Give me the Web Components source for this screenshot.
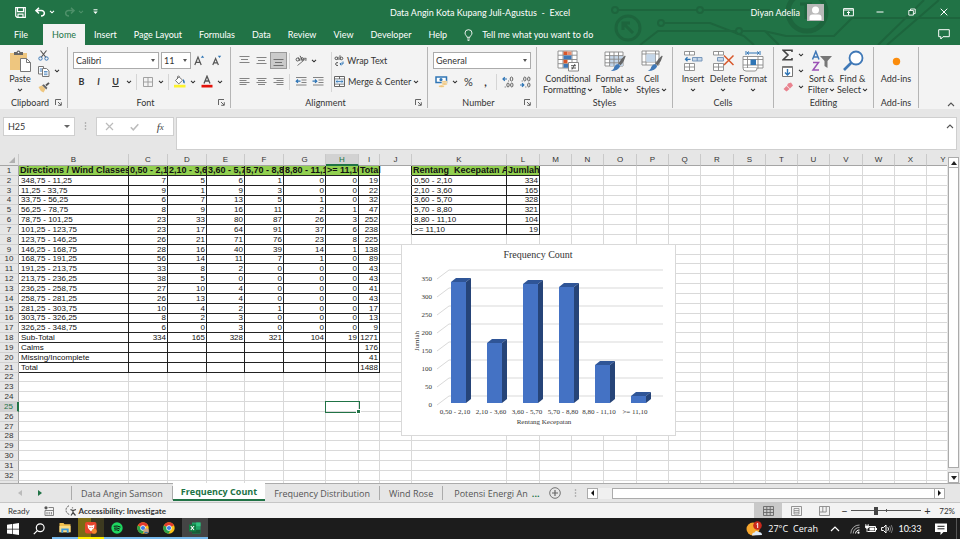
<!DOCTYPE html>
<html lang="en">
<head>
<meta charset="utf-8">
<title>Data Angin Kota Kupang Juli-Agustus - Excel</title>
<style>
html,body{margin:0;height:100%}
body{font-family:Lato,"Open Sans",sans-serif;font-size:9px;color:#333;overflow:hidden;background:#e6e6e6}
</style>
</head>
<body>
<xl-app></xl-app>
<script>
const G = '#217346';
const lines = rows => rows.map(([a, b, y]) => `<path d="M${a} ${y}H${b}"/>`).join('');
const ICONS = {
  save: [11, 11, `<path d="M.7.7h9.6v9.6H2L.7 9z M2.5.7v4h6v-4 M3 10V7.2h5V10" fill="none" stroke="#fff" stroke-width="1.2"/>`],
  undo: [11, 10, `<path d="M4 .8 1 3.6l3 2.9M1.2 3.6h5.2c4 0 4 5.4-.4 5.4" fill="none" stroke="#fff" stroke-width="1.5"/>`],
  redo: [11, 10, `<path d="M7 .8l3 2.8-3 2.9M9.8 3.6H4.6C.6 3.6.6 9 5 9" fill="none" stroke="#4d9069" stroke-width="1.5"/>`],
  chev: [6, 4, `<path d="M1 .8 3 2.8 5 .8" fill="none" stroke="currentColor" stroke-width="1.1"/>`],
  custom: [5, 6, `<path d="M.5.8h4" stroke="#fff"/><path d="M.3 2.6h4.4L2.5 5z" fill="#fff"/>`],
  display: [11, 9, `<path d="M.6.6h9.8v7.2H.6zM.6 2h9.8M5.500 7V3.600M4 5l1.500-1.500L7 5" fill="none" stroke="#fff"/>`],
  min: [8, 8, `<path d="M.5 4h7" stroke="#fff"/>`],
  max: [8, 8, `<path d="M.8 2.500h4.600v4.600H.8zM2.500 2.300V1h4.700v4.600H5.600" fill="none" stroke="#fff" stroke-width=".9"/>`],
  close: [8, 8, `<path d="M.7.700l6.600 6.600M7.300.7L.7 7.300" stroke="#fff"/>`],
  comment: [12, 11, `<path d="M.7.700h10.600v7H5L2.800 10V7.700H.7z" fill="none" stroke="#fff"/>`],
  bulb: [9, 12, `<path d="M3 8.300C3 6.800 1 6.200 1 4a3.500 3.300 0 0 1 7 0c0 2.200-2 2.800-2 4.300zM3.200 10h2.600M3.600 11.400h1.800" fill="none" stroke="#fff" stroke-width=".9"/>`],
  user: [17, 17, `<path d="M0 0h17v17H0z" fill="#b9b9b9"/><circle cx="8.500" cy="6" r="3.500" fill="#fff"/><path d="M2.500 16v-2.500q0-3 3-3h6q3 0 3 3V16z" fill="#fff"/>`],
  paste: [21, 22, `<path d="M0 3h17v17H0z" fill="#eec67f"/><path d="M4 5V2h2.600a2 2 0 0 1 3.800 0H13v3z" fill="#666"/><circle cx="8.500" cy="2.500" r=".8" fill="#fff"/><path d="M10.500 8.500h6l4 4v9h-10z" fill="#fff" stroke="#777"/><path d="M16.500 8.500v4h4" fill="none" stroke="#777"/>`],
  cut: [11, 11, `<path d="M2.500.5 8 7.500M8.500.5 3 7.500" stroke="#555" stroke-width="1.200"/><circle cx="2.500" cy="8.500" r="1.700" fill="none" stroke="#3b79b8"/><circle cx="8.500" cy="8.500" r="1.700" fill="none" stroke="#3b79b8"/>`],
  copy: [12, 11, `<path d="M.5.500h5v7.500h-5z" fill="#fff" stroke="#777"/><path d="M1.800 3h2.400M1.800 5h2.400" stroke="#3b79b8"/><path d="M4.500 2.500h4l2.500 2.300v5.700H4.500z" fill="#fff" stroke="#777"/><path d="M6 5.500h3.500M6 7h3.500M6 8.700h3.500" stroke="#3b79b8" stroke-width=".8"/>`],
  painter: [12, 11, `<path d="M.5 5 4 3.500 7.500 7 5.500 10.500 2.800 9z" fill="#eec67f"/><path d="M4 3.200l1.800-1 3.600 3.500-1 1.800z" fill="#666"/><path d="M8 3.500 11 .8" stroke="#555" stroke-width="1.800"/>`],
  grow: [11, 11, `<path d="M.8 10 4 2l3.200 8M2 7.300h4" fill="none" stroke="#555" stroke-width="1.200"/><path d="M6.800 2.800 8.500.600l1.700 2.200z" fill="#2f75b5"/>`],
  shrink: [10, 11, `<path d="M.8 10 3.600 3.500 6.400 10M1.800 7.800h3.600" fill="none" stroke="#555" stroke-width="1.200"/><path d="M5.800.800h3.400L7.500 3z" fill="#2f75b5"/>`],
  borders: [10, 10, `<path d="M.5.500h9v9h-9zM5 .5v9M.5 5h9" fill="none" stroke="#999" stroke-width=".9"/>`],
  bucket: [13, 13, `<path d="M2.500 5.500 6 1.800l3.600 3.400-3.800 3.700z" fill="#fff" stroke="#666" stroke-width=".9"/><path d="M4.500 4V1.500q1.200-1.500 2 .5" fill="none" stroke="#666" stroke-width=".8"/><path d="M10 4q2.500 2 1.500 4.500-1.500 0-1.500-2z" fill="#2f75b5"/><path d="M1 9.800h11.500v2.700H1z" fill="#fdf32c"/>`],
  fcolor: [12, 13, `<path d="M3 8.500 6 1.200l3 7.300M4 6h4" fill="none" stroke="#555" stroke-width="1.300"/><path d="M.5 9.800h11v2.700H.5z" fill="#e3120b"/>`],
  alT: [11, 9, `<g stroke="#777" stroke-width=".9">${lines([[.5,10.5,.5],[2,9,3.5],[.5,10.5,6.5]])}</g>`],
  alM: [11, 9, `<g stroke="#777" stroke-width=".9">${lines([[.5,10.5,1.5],[2,9,4.5],[.5,10.5,7.5]])}</g>`],
  alB: [11, 11, `<g stroke="#666" stroke-width=".9">${lines([[.5,10.5,4.5],[2,9,7.5],[.5,10.5,10.5]])}</g>`],
  alL: [11, 9, `<g stroke="#777" stroke-width=".9">${lines([[.5,10.5,1.5],[.5,7.5,3.5],[.5,10.5,5.5],[.5,7.5,7.5]])}</g>`],
  alC: [11, 9, `<g stroke="#777" stroke-width=".9">${lines([[.5,10.5,1.5],[2,9,3.5],[.5,10.5,5.5],[2,9,7.5]])}</g>`],
  alR: [11, 9, `<g stroke="#777" stroke-width=".9">${lines([[.5,10.5,1.5],[3.5,10.5,3.5],[.5,10.5,5.5],[3.5,10.5,7.5]])}</g>`],
  outd: [12, 9, `<g stroke="#777" stroke-width=".9">${lines([[1,11.5,.5],[6.5,11.5,3],[6.5,11.5,5.5],[1,11.5,8]])}</g><path d="M5.500 4.200H1.500M3 2.500 1.200 4.200 3 5.900" fill="none" stroke="#2f75b5" stroke-width="1.200"/>`],
  ind: [12, 9, `<g stroke="#777" stroke-width=".9">${lines([[1,11.5,.5],[6.5,11.5,3],[6.5,11.5,5.5],[1,11.5,8]])}</g><path d="M.500 4.200h4M3 2.500 4.800 4.200 3 5.900" fill="none" stroke="#2f75b5" stroke-width="1.200"/>`],
  orient: [12, 11, `<circle cx="2.600" cy="4.500" r="1.500" fill="none" stroke="#555"/><path d="M3.500 2.500 5 6M5 .8l2.500 4.500" stroke="#555"/><circle cx="7.200" cy="4" r="1.300" fill="none" stroke="#555"/><path d="M2.500 10.500 11 3.500M8.500 3.300 11.200 3.300 10.800 6" fill="none" stroke="#777"/>`],
  wrap: [10, 12, `<circle cx="2.300" cy="3.300" r="1.300" fill="none" stroke="#555"/><path d="M4 1.800V5M6 .3V5" stroke="#555"/><circle cx="7.500" cy="3.400" r="1.300" fill="none" stroke="#555"/><path d="M4 7.800a1.500 1.500 0 1 0 0 2.500" fill="none" stroke="#555"/><path d="M9 6.500v2.500H6M7.300 7.600 5.900 9l1.400 1.400" fill="none" stroke="#2f75b5"/>`],
  merge: [11, 11, `<path d="M.5.500h10v10H.5z" fill="#fff" stroke="#666"/><path d="M.5 3h10M.5 8h10M5.500.500v2.500M5.500 8v2.500" stroke="#666"/><path d="M1 3.500h9v4H1z" fill="#dbe8f5"/><path d="M2 5.500h7M3.500 4.300 2.200 5.500l1.300 1.200M7.500 4.300l1.300 1.200-1.300 1.200" fill="none" stroke="#2f75b5" stroke-width=".8"/>`],
  money: [13, 12, `<path d="M1 1h10.500v5.500H1z" fill="#fff" stroke="#2f75b5" stroke-width="1.500"/><circle cx="6" cy="3.700" r="1.600" fill="#2f75b5"/><g fill="#eec67f" stroke="#fff" stroke-width=".4"><ellipse cx="9.500" cy="6" rx="3" ry="1.300"/><ellipse cx="9.500" cy="8" rx="3" ry="1.300"/><ellipse cx="6.500" cy="10.300" rx="3" ry="1.300"/></g>`],
  incd: [12, 12, `<path d="M5 3H1.300M2.800 1.300 1 3l1.800 1.700" fill="none" stroke="#2f75b5" stroke-width="1.200"/><g fill="none" stroke="#555" stroke-width=".9"><ellipse cx="9.500" cy="3" rx="1.300" ry="2"/><ellipse cx="6" cy="9" rx="1.200" ry="2"/><ellipse cx="9.800" cy="9" rx="1.200" ry="2"/><path d="M6.600 4.500v1M3.200 10.500v1"/></g>`],
  decd: [12, 12, `<path d="M1 9h3.700M3 7.300 4.800 9 3 10.700" fill="none" stroke="#2f75b5" stroke-width="1.200"/><g fill="none" stroke="#555" stroke-width=".9"><ellipse cx="9.800" cy="3" rx="1.200" ry="2"/><ellipse cx="5.800" cy="3" rx="1.200" ry="2"/><ellipse cx="9.800" cy="9" rx="1.200" ry="2"/><path d="M3.200 4.500v1M6.800 10.500v1"/></g>`],
  cond: [22, 22, `<path d="M1 1h19v17H1z" fill="#fff" stroke="#888" stroke-width=".9"/><path d="M1 5.200h19M1 9.500h19M1 13.700h19M6 1v17M15 1v17" stroke="#888" stroke-width=".9"/><path d="M6.500 1.500h4v3.500h-4zM6.500 9.800h4v3.500h-4z" fill="#d8572a"/><path d="M6.500 5.500h8v3.800h-8zM6.500 14h5v3.800h-5z" fill="#3f78b7"/><path d="M10.500 1.500h4v3.500h-4z" fill="#e98d6d"/><path d="M11.500 12.500h10v8.500h-10z" fill="#fff" stroke="#888"/><path d="M14 15.700h5M14 18h5M18 14l-3 5.500" stroke="#444" stroke-width=".9"/>`],
  fmtTable: [22, 22, `<path d="M1 2h18v14H1z" fill="#fff" stroke="#888" stroke-width=".9"/><path d="M5.800 6h13v10h-13z" fill="#c5d7ea"/><path d="M1 5.600h18M1 9.200h18M1 12.800h18M5.600 2v14M10 2v14M14.500 2v14" stroke="#888" stroke-width=".9"/><path d="M21 5.500q-4 3-6.500 8l2 2q4-4 5-9z" fill="#666"/><path d="M14.200 14l2 2q-1.500 5-9.700 5 3.500-1.500 3.700-4 1.500-3 4-3z" fill="#3f78b7"/>`],
  cellStyle: [22, 22, `<path d="M1 1h17v14H1z" fill="#fff" stroke="#888" stroke-width=".9"/><path d="M1 4h17M1 12h17M5 1v14M14.500 1v14" stroke="#888" stroke-width=".9"/><path d="M5.300 4.300h9v7.500h-9z" fill="#c5d7ea"/><path d="M21 5.500q-4 3-6.500 8l2 2q4-4 5-9z" fill="#666"/><path d="M14.200 14l2 2q-1.500 5-9.700 5 3.500-1.500 3.700-4 1.500-3 4-3z" fill="#3f78b7"/>`],
  insert: [20, 22, `<g fill="#fff" stroke="#888" stroke-width=".9"><path d="M1.500 1.500h10v3.500h-10zM6.500 1.500v3.500M1.500 13.500h10v7h-10zM6.500 13.500v7M1.500 17h10"/></g><path d="M9.500 7.500h9.500v3.500H9.500z" fill="#c5d7ea" stroke="#6d8fb5" stroke-width=".9"/><path d="M14.200 7.500v3.500" stroke="#6d8fb5"/><path d="M7.500 9.300H2.500M4.500 7.300l-2 2 2 2" fill="none" stroke="#2f75b5" stroke-width="1.300"/>`],
  delete: [22, 22, `<g fill="#fff" stroke="#888" stroke-width=".9"><path d="M1.500 1.500h10v3.500h-10zM6.500 1.500v3.500M1.500 13.500h10v7h-10zM6.500 13.500v7M1.500 17h10"/></g><path d="M5.500 7.500h6v3.500h-6z" fill="#c5d7ea" stroke="#6d8fb5" stroke-width=".9"/><path d="M12 5.500l9.500 9.500M21.500 5.500 12 15" stroke="#d8572a" stroke-width="1.500"/>`],
  format: [22, 22, `<path d="M4 1v4M18 1v4M5 3h12M7 1.500 5 3l2 1.500M15 1.500 17 3l-2 1.500" fill="none" stroke="#2f75b5"/><path d="M1 6.500h20v11.500H1z" fill="#fff" stroke="#888" stroke-width=".9"/><path d="M1 9.500h20M1 15h20M5.500 6.500v12M16 6.500v12" stroke="#888" stroke-width=".9"/><path d="M8.500 9.500h5.500v5.500H8.500z" fill="#2f75b5"/><path d="M1 18q0 3 3 3h9q2 0 2-3" fill="#fff" stroke="#888" stroke-width=".9"/>`],
  sigma: [11, 12, `<path d="M10 3V1.200H1.200L6 6 1.200 10.800H10V9" fill="none" stroke="#444" stroke-width="1.600"/>`],
  fill: [11, 11, `<path d="M.5.500h10v10H.5z" fill="#fff" stroke="#777"/><path d="M.5 1.200h10" stroke="#777" stroke-width="1.400"/><path d="M5.500 3v6M3 6.500 5.500 9 8 6.500" fill="none" stroke="#2f75b5" stroke-width="1.400"/>`],
  clear: [10, 10, `<path d="M5 1.500 8 .500 10 3.500 7 6.500 4 3.500z" fill="#e9838f"/><path d="M3.500 4 6.500 7 3.500 9.500.500 7z" fill="#e9838f"/>`],
  sort: [22, 22, `<path d="M1.500 9.500 4.800 1.500 8 9.500M2.500 7h4.500" fill="none" stroke="#3f78b7" stroke-width="1.500"/><path d="M2 12.500h5.500L2 20h6" fill="none" stroke="#9b51b5" stroke-width="1.500"/><path d="M9 6h12l-4.500 5v7l-3-2v-5z" fill="#777"/>`],
  find: [22, 22, `<circle cx="14" cy="8" r="6.500" fill="#fff" stroke="#3f78b7" stroke-width="1.800"/><path d="M9.500 12.500 2 20" stroke="#3f78b7" stroke-width="2.600"/>`],
  addins: [9, 9, `<circle cx="4.500" cy="4.500" r="3.700" fill="#fb8c0c"/>`],
  launch: [7, 7, `<path d="M.5 6V.500H6M3 3l3 3M6.300 3.200v3.100H3.200" fill="none" stroke="#555" stroke-width=".9"/>`],
  up: [8, 5, `<path d="M1 4 4 1l3 3" fill="none" stroke="#555" stroke-width="1.100"/>`],
  x: [9, 9, `<path d="M1 1l7 7M8 1 1 8" stroke="#bbb" stroke-width="1.200"/>`],
  check: [9, 8, `<path d="M.800 4.200 3.300 6.800 8.300 1.200" fill="none" stroke="#bbb" stroke-width="1.500"/>`],
  dots: [3, 8, `<g fill="#999"><circle cx="1.500" cy="1" r=".8"/><circle cx="1.500" cy="4" r=".8"/><circle cx="1.500" cy="7" r=".8"/></g>`],
  plus: [12, 12, `<circle cx="6" cy="6" r="5.300" fill="none" stroke="#666" stroke-width=".9"/><path d="M6 3v6M3 6h6" stroke="#666" stroke-width="1.200"/>`],
  macro: [10, 10, `<circle cx="2" cy="1.800" r="1.600" fill="#555"/><path d="M4.500 1.500H9.500v8H1V4.500M1 4.500h8.500M3 6v2.500M5.200 6v2.500M7.400 6v2.500" fill="none" stroke="#777" stroke-width=".9"/>`],
  access: [12, 11, `<path d="M4 .8A4.500 4.500 0 0 0 5 9.500" fill="none" stroke="#555" stroke-dasharray="2 1"/><path d="M5.500 4.500l2.500 1 3-1M8 5.500v2L6 10.500M8 7.500l2.500 3M7.500 2.500v.8" fill="none" stroke="#444" stroke-width="1.200"/>`],
  viewN: [11, 10, `<path d="M.5.500h10v9H.5zM.5 3.500h10M.5 6.500h10M3.800.500v9M7.200.500v9" fill="none" stroke="#666" stroke-width=".9"/>`],
  viewL: [11, 10, `<path d="M.5.500h10v9H.5z" fill="none" stroke="#888" stroke-width=".9"/><path d="M3 2.500h5v5.500H3zM3 4.500h5M3 6.300h5" fill="none" stroke="#888" stroke-width=".8"/>`],
  viewP: [11, 10, `<path d="M.5.500h10v9H.5zM3.800.500v5.500M7.200.500v5.500H.5" fill="none" stroke="#888" stroke-width=".9"/>`],
  win: [12, 12, `<path d="M0 1.700 5 1v4.700H0zM5.700.900 12 0v5.700H5.700zM0 6.400h5v4.700L0 10.400zM5.700 6.400H12V12l-6.300-.9z" fill="#fff"/>`],
  search: [12, 12, `<circle cx="7.200" cy="4.700" r="3.900" fill="none" stroke="#fff" stroke-width="1.200"/><path d="M4.300 7.600.8 11.200" stroke="#fff" stroke-width="1.200"/>`],
  explorer: [12, 11, `<path d="M.5 1h4l1 1.200h6v8H.5z" fill="#f2c04d"/><path d="M.5 4h11v6.200H.5z" fill="#fbdc85"/><path d="M2.300 10.700V6.500h7.400v4.200H7.800V8.300H4.200v2.400z" fill="#3f9bdc"/>`],
  fox: [12, 12, `<rect width="11.500" height="11.500" rx="2" fill="#e8452c"/><path d="M2.500 2.500 4.500 3.500h3l2-1-.5 3.500L6 9.500 3 6z" fill="#fff"/><path d="M4.500 5h1v1h-1zM6.700 5h1v1h-1z" fill="#e8452c"/><circle cx="9.200" cy="9.200" r="2.500" fill="#f0872b"/>`],
  spotify: [12, 12, `<circle cx="6" cy="6" r="5.700" fill="#1ed760"/><path d="M2.700 4.300q3.500-1 6.800.8M3 6.200q3-.8 5.800.8M3.300 8q2.500-.6 4.800.6" fill="none" stroke="#111" stroke-width="1"/>`],
  chrome: [12, 12, `<circle cx="6" cy="6" r="5.700" fill="#fbc116"/><path d="M.9 3.400A5.700 5.700 0 0 0 5.500 11.700L8 7z" fill="#2ba24c"/><path d="M6 6 1 3.200A5.700 5.700 0 0 1 11 3.200z" fill="#e33b2e"/><circle cx="6" cy="6" r="2.700" fill="#fff"/><circle cx="6" cy="6" r="2.100" fill="#3f7de8"/>`],
  chrome2: [12, 12, `<circle cx="6" cy="6" r="5.700" fill="#fbc116"/><path d="M.9 3.400A5.700 5.700 0 0 0 5.500 11.700L8 7z" fill="#2ba24c"/><path d="M6 6 1 3.200A5.700 5.700 0 0 1 11 3.200z" fill="#e33b2e"/><circle cx="6" cy="6" r="2.700" fill="#fff"/><circle cx="6" cy="6" r="2.100" fill="#3f7de8"/><circle cx="9.200" cy="9" r="2.700" fill="#c9a38a"/><path d="M7 11q2-2.500 4.400 0z" fill="#3a76a8"/>`],
  excel: [12, 12, `<path d="M3 .5h8.500v11H3z" fill="#21a366"/><path d="M7.200.5h4.300v3.700H7.200z" fill="#33c481"/><path d="M7.200 7.800h4.300v3.700H3V7.800z" fill="#185c37"/><path d="M0 2.500h7v7H0z" fill="#107c41"/><path d="M1.800 4 5 8M5 4 1.800 8" stroke="#fff" stroke-width="1.100"/>`],
  weather: [17, 15, `<circle cx="7" cy="8" r="6.500" fill="#f6a62d"/><path d="M6 14.500q0-3 2.500-3 1.500-2.500 4-.5 3.500 0 3.500 3z" fill="#dce9f8"/><circle cx="11.500" cy="4.500" r="4.300" fill="#c9281c"/><path d="M10.500 3.200l1.200-.9V7" fill="none" stroke="#fff" stroke-width="1"/>`],
  caret: [10, 6, `<path d="M1 5 5 1l4 4" fill="none" stroke="#fff" stroke-width="1.200"/>`],
  wifi: [10, 10, `<g fill="none" stroke="#aaa"><path d="M.8 9.500A8.500 8.500 0 0 1 9.500 1"/><path d="M3.200 9.500a6 6 0 0 1 6.300-6"/><path d="M5.600 9.500a3.500 3.500 0 0 1 3.900-3.500" stroke="#fff"/></g><circle cx="8.500" cy="8.700" r="1.100" fill="#fff"/>`],
  battery: [12, 9, `<path d="M4 2.500h6.500v5H2.500" fill="none" stroke="#fff"/><path d="M4.500 3.500h5v3h-5zM11 4h1v2h-1z" fill="#fff"/><path d="M.8 0v2.500M3.200 0v2.500M.3 2h3.400v1.500q-1.700 2-3.400 0zM2 4.500V8" fill="#fff" stroke="#fff" stroke-width=".8"/>`],
  sound: [12, 10, `<path d="M.6 3.500H2.500L5 1v8L2.500 6.500H.6z" fill="none" stroke="#fff"/><path d="M6.800 3.200q1.500 1.800 0 3.600" fill="none" stroke="#fff"/><path d="M8.500 2q2.500 3 0 6M10.200 1q3 4 0 8" fill="none" stroke="#777"/>`],
  note: [12, 12, `<path d="M0 .500h12v8.500H8.500L5.500 12V9H0z" fill="#fff"/><path d="M2.500 3.300h7M2.500 5.800h7" stroke="#1c1c1c"/>`]
};

const RESET = `*{box-sizing:border-box}
button{font:inherit;color:inherit;background:none;border:0;padding:0;margin:0;display:inline-flex;align-items:center;justify-content:center;white-space:nowrap}
:host{display:block}`;

function define(name, css, html) {
  const tpl = document.createElement('template');
  customElements.define(name, class extends HTMLElement {
    constructor() { super(); this.attachShadow({mode: 'open'}); }
    connectedCallback() {
      if (this.shadowRoot.childNodes.length) return;
      tpl.innerHTML = `<style>${RESET}${css}</style>${typeof html === 'function' ? html(this) : html}`;
      this.shadowRoot.append(tpl.content.cloneNode(true));
    }
  });
}

define('x-icon', `:host{display:inline-flex;flex:none}svg{display:block}`, el => {
  const [w, h, body] = ICONS[el.getAttribute('name')];
  return `<svg width="${w}" height="${h}" viewBox="0 0 ${w} ${h}" aria-hidden="true">${body}</svg>`;
});

/* Icon-only button */
define('x-ib', `:host{display:inline-flex;flex:none;width:17px;height:17px}
:host([w10]){width:10px}
button{width:100%;height:100%}
:host([on]) button{background:#cacaca;border:1px solid #999}`,
  el => `<button type="button" aria-label="${el.getAttribute('label')}"><x-icon name="${el.getAttribute('name')}"></x-icon></button>`);

/* Large ribbon button: picture above one or two caption lines */
define('x-big', `:host{flex:none}
button{flex-direction:column;justify-content:flex-start;width:100%;line-height:11px;padding-top:2px}
.i{height:24px;display:flex;align-items:center}
.l{display:flex;align-items:center;gap:1px;height:11px}`,
  el => {
    const [a, b] = el.getAttribute('text').split('|');
    const second = b === undefined ? '' : `<span class="l">${b ? `<span>${b}</span>` : ''}<x-icon name="chev"></x-icon></span>`;
    return `<button type="button"><span class="i"><x-icon name="${el.getAttribute('icon')}"></x-icon></span><span class="l">${a}</span>${second}</button>`;
  });

define('x-select', `:host{position:relative;height:17px}
select{appearance:none;width:100%;height:100%;border:1px solid #ababab;border-radius:0;background:#fff;font:inherit;color:#333;padding:0 2px;margin:0;display:block}
:host::after{content:"";position:absolute;right:4px;top:7px;border:2px solid transparent;border-top:3px solid #555;border-bottom:0}`,
  el => `<select aria-label="${el.getAttribute('label')}"><option>${el.getAttribute('value')}</option></select>`);

define('x-group', `:host{display:flex;flex-direction:column;flex:none;border-right:1px solid #b5b5b5;margin:2px 0 1px;padding:0 5px}
.c{flex:1;display:flex;min-height:0}
.f{display:flex;align-items:center;height:11px;line-height:11px}
.f span{flex:1;text-align:center}
button{width:7px;height:7px}`,
  el => `<div class="c"><slot></slot></div><div class="f"><span>${el.getAttribute('label')}</span>${el.hasAttribute('launch') ? `<button type="button" aria-label="${el.getAttribute('label')} settings"><x-icon name="launch"></x-icon></button>` : ''}</div>`);

define('xl-header', `:host{position:relative;background:${G};color:#fff;overflow:hidden;flex:none}
.art{position:absolute;right:0;top:0}
.bar{position:relative;display:grid;grid-template-columns:1fr auto 1fr;height:24px;align-items:center}
.q{display:flex;align-items:center;padding-left:15px}
.q x-icon{margin-right:3px}
.q .s{margin-right:9px}.q .m{margin-right:9px}
.u{display:flex;align-items:center;justify-content:flex-end}
.u span{margin-right:7px}
.u button{width:32px;height:20px}
.u .first{margin-left:8px}
nav{position:relative;display:flex;gap:1px;height:21px;align-items:stretch;padding-left:4px}
nav button{padding:0 8px}
nav .file{padding:0 14px 0 10px}
nav .on{padding:0 9px;background:#f3f3f3;color:${G}}
nav .tell{gap:9px;padding:0 8px}
nav .cm{margin-left:auto;padding:0 10px}`,
`<svg class="art" width="350" height="45" viewBox="0 0 350 45" aria-hidden="true"><g fill="none" stroke="#1d653d" stroke-width="2">
<circle cx="18" cy="28" r="12" stroke-width="3"/><path d="M23 33 13 23M13 30v-7h7" stroke-width="3"/><circle cx="5" cy="10" r="3"/><path d="M8 10h79"/><circle cx="90" cy="10" r="3"/><path d="M93 10h67"/><circle cx="51" cy="23" r="3"/><path d="M54 23h46l34 13 10 9M30 45 48 31h78"/><circle cx="129" cy="31" r="3"/><path d="M132 31h22l22 5h48l18-18h108M155 31l14 14M268 45l46-45M277 45l52-45"/><circle cx="197" cy="12" r="19" stroke-width="5"/><path d="M190 4h12M196 4v15" stroke-width="3"/></g></svg>
<div class="bar"><div class="q"><x-icon class="s" name="save"></x-icon><x-icon name="undo"></x-icon><x-icon class="m" name="chev"></x-icon><x-icon name="redo"></x-icon><x-icon class="m" name="chev" style="color:#4d9069"></x-icon><x-icon name="custom"></x-icon></div>
<div class="title">Data Angin Kota Kupang Juli-Agustus&nbsp; -&nbsp; Excel</div>
<div class="u"><span>Diyan Adelia</span><x-icon name="user"></x-icon><button class="first" type="button" aria-label="Ribbon display"><x-icon name="display"></x-icon></button><button type="button" aria-label="Minimize"><x-icon name="min"></x-icon></button><button type="button" aria-label="Restore"><x-icon name="max"></x-icon></button><button type="button" aria-label="Close"><x-icon name="close"></x-icon></button></div></div>
<nav><button class="file" type="button">File</button><button class="on" type="button">Home</button>${['Insert','Page Layout','Formulas','Data','Review','View','Developer','Help'].map(t => `<button type="button">${t}</button>`).join('')}<button class="tell" type="button"><x-icon name="bulb"></x-icon>Tell me what you want to do</button><button class="cm" type="button" aria-label="Comments"><x-icon name="comment"></x-icon></button></nav>`);

const ch = '<x-ib w10 name="chev" label="More"></x-ib>';
define('xl-ribbon', `:host{display:flex;background:#f3f3f3;flex:none;height:64px}
.col{display:flex;flex-direction:column}
.r{display:flex;align-items:center;height:21px}
.r.t{padding-top:3px;height:24px}
.sep{width:1px;height:16px;background:#d5d5d5;margin:0 2px}
.tall{width:1px;background:#d5d5d5;margin:5px 2px 5px 5px}
.tx{display:inline-flex;align-items:center;gap:3px;height:17px}
.b{width:17px;height:17px}
.small{display:flex;flex-direction:column}
.small div{display:flex;height:16px;align-items:center}
.end{margin-left:auto;align-self:flex-end;width:18px;height:10px}`,
`<x-group label="Clipboard" launch style="width:68px"><x-big icon="paste" text="Paste|" style="width:30px"></x-big><div class="small"><div><x-ib name="cut" label="Cut"></x-ib></div><div><x-ib name="copy" label="Copy"></x-ib>${ch}</div><div><x-ib name="painter" label="Format Painter"></x-ib></div></div></x-group>
<x-group label="Font" launch style="width:163px"><div class="col"><div class="r t"><x-select label="Font" value="Calibri" style="width:86px;margin-right:2px"></x-select><x-select label="Size" value="11" style="width:30px"></x-select><x-ib name="grow" label="Grow font"></x-ib><x-ib name="shrink" label="Shrink font"></x-ib></div>
<div class="r"><button class="b" type="button"><b>B</b></button><button class="b" type="button"><b><i>I</i></b></button><button class="b" type="button"><b><u>U</u></b></button>${ch}<span class="sep"></span><x-ib name="borders" label="Borders"></x-ib>${ch}<span class="sep"></span><x-ib name="bucket" label="Fill color"></x-ib>${ch}<x-ib name="fcolor" label="Font color"></x-ib>${ch}</div></div></x-group>
<x-group label="Alignment" launch style="width:197px"><div class="col"><div class="r t"><x-ib name="alT" label="Top"></x-ib><x-ib name="alM" label="Middle"></x-ib><x-ib on name="alB" label="Bottom"></x-ib><span class="sep"></span><x-ib name="orient" label="Orientation"></x-ib>${ch}</div><div class="r"><x-ib name="alL" label="Left"></x-ib><x-ib name="alC" label="Center"></x-ib><x-ib name="alR" label="Right"></x-ib><span class="sep"></span><x-ib name="outd" label="Outdent"></x-ib><x-ib name="ind" label="Indent"></x-ib></div></div><span class="tall"></span><div class="col"><div class="r t"><button class="tx" type="button"><x-icon name="wrap"></x-icon>Wrap Text</button></div><div class="r"><button class="tx" type="button"><x-icon name="merge"></x-icon>Merge &amp; Center</button>${ch}</div></div></x-group>
<x-group label="Number" launch style="width:109px"><div class="col"><div class="r t"><x-select label="Number format" value="General" style="width:98px"></x-select></div><div class="r"><x-ib name="money" label="Accounting"></x-ib>${ch}<button class="b" type="button" style="font-size:11px">%</button><button class="b" type="button" style="font-size:11px"><b>,</b></button><span class="sep"></span><x-ib name="incd" label="More decimals"></x-ib><x-ib name="decd" label="Fewer decimals"></x-ib></div></div></x-group>
<x-group label="Styles" style="width:136px"><x-big icon="cond" text="Conditional|Formatting" style="width:52px"></x-big><x-big icon="fmtTable" text="Format as|Table" style="width:42px"></x-big><x-big icon="cellStyle" text="Cell|Styles" style="width:31px"></x-big></x-group>
<x-group label="Cells" style="width:101px"><x-big icon="insert" text="Insert|" style="width:30px"></x-big><x-big icon="delete" text="Delete|" style="width:30px"></x-big><x-big icon="format" text="Format|" style="width:30px"></x-big></x-group>
<x-group label="Editing" style="width:100px"><div class="small"><div><x-ib name="sigma" label="Sum"></x-ib>${ch}</div><div><x-ib name="fill" label="Fill"></x-ib>${ch}</div><div><x-ib name="clear" label="Clear"></x-ib>${ch}</div></div><x-big icon="sort" text="Sort &amp;|Filter" style="width:31px"></x-big><x-big icon="find" text="Find &amp;|Select" style="width:31px"></x-big></x-group>
<x-group label="Add-ins" style="width:45px"><x-big icon="addins" text="Add-ins" style="width:34px"></x-big></x-group>
<button class="end" type="button" aria-label="Collapse ribbon"><x-icon name="up"></x-icon></button>`);

define('xl-formula', `:host{display:flex;flex:none;background:#e6e6e6;padding:8px 3px 4px;align-items:flex-start}
.n{position:relative;width:72px;height:19px}
input{width:100%;height:100%;border:1px solid #cfcfcf;background:#fff;font:inherit;color:#333;padding:0 4px;margin:0;display:block}
.n::after{content:"";position:absolute;right:5px;top:8px;border:3px solid transparent;border-top:3px solid #666;border-bottom:0}
.d{margin:5px 9px 0}
.f{display:flex;height:19px;border:1px solid #cfcfcf;background:#fff;width:78px;margin-right:2px}
.f button{flex:1}
.fx{font:italic 11px "Liberation Serif",serif;color:#444}
.fx small{font-size:9px}
.t{flex:1;display:flex;border:1px solid #cfcfcf;background:#fff;height:33px}
textarea{flex:1;border:0;resize:none;background:none;font:inherit;margin:0;padding:3px}
.t button{width:12px;height:16px}`,
`<div class="n"><input aria-label="Name box" value="H25"></div><x-icon class="d" name="dots"></x-icon><div class="f"><button type="button" aria-label="Cancel"><x-icon name="x"></x-icon></button><button type="button" aria-label="Enter"><x-icon name="check"></x-icon></button><button class="fx" type="button">f<small>x</small></button></div><div class="t"><textarea aria-label="Formula bar"></textarea><button type="button" aria-label="Collapse"><x-icon name="up"></x-icon></button></div>`);

const WIDTHS = [19,110,39,39,38,39,42,33,21,32,95,33,32,32,33,32,32,33,32,32,32,33,32,32];
const LETTERS = 'BCDEFGHIJKLMNOPQRSTUVWXY';
const MAIN = `Directions / Wind Classes|0,50 - 2,10|2,10 - 3,60|3,60 - 5,70|5,70 - 8,80|8,80 - 11,10|>= 11,10|Total
348,75 - 11,25|7|5|6|1|0|0|19
11,25 - 33,75|9|1|9|3|0|0|22
33,75 - 56,25|6|7|13|5|1|0|32
56,25 - 78,75|8|9|16|11|2|1|47
78,75 - 101,25|23|33|80|87|26|3|252
101,25 - 123,75|23|17|64|91|37|6|238
123,75 - 146,25|26|21|71|76|23|8|225
146,25 - 168,75|28|16|40|39|14|1|138
168,75 - 191,25|56|14|11|7|1|0|89
191,25 - 213,75|33|8|2|0|0|0|43
213,75 - 236,25|38|5|0|0|0|0|43
236,25 - 258,75|27|10|4|0|0|0|41
258,75 - 281,25|26|13|4|0|0|0|43
281,25 - 303,75|10|4|2|1|0|0|17
303,75 - 326,25|8|2|3|0|0|0|13
326,25 - 348,75|6|0|3|0|0|0|9
Sub-Total|334|165|328|321|104|19|1271
Calms|||||||176
Missing/Incomplete|||||||41
Total|||||||1488`.split('\n').map(r => r.split('|'));
const SIDE = [['Rentang  Kecepatan A','Jumlah'],['0,50 - 2,10','334'],['2,10 - 3,60','165'],['3,60 - 5,70','328'],['5,70 - 8,80','321'],['8,80 - 11,10','104'],['>= 11,10','19']];
const esc = s => s.replace(/>/g, '&gt;');
function cell(r, c) {
  let t = '', cls = [];
  if (c < 8 && r < 21) { t = MAIN[r][c]; cls.push('k'); if (c) cls.push('n'); }
  else if ((c === 9 || c === 10) && r < 7) { t = SIDE[r][c - 9]; cls.push('k'); if (c === 10) cls.push('n'); }
  else if (c === 8 && r < 7) cls.push('kr');
  if (t && r === 0) cls.push('h');
  if (r === 0 && (c === 7 || c === 10)) cls.push('o');
  if (r === 24 && c === 6) cls.push('sel');
  return `<td class="${cls.join(' ')}">${esc(t)}</td>`;
}
define('xl-grid', `:host{overflow:hidden;min-width:0;background:#fff}
table{table-layout:fixed;border-collapse:separate;border-spacing:0;width:100%;min-width:960px;font-family:"Liberation Sans",sans-serif;font-size:8px;color:#111}
th{background:#e6e6e6;color:#333;font-weight:normal;padding:0;border-right:1px solid #c9c9c9}
thead th{height:12px;line-height:10px;padding-top:1px;border-bottom:1px solid #a5a5a5}
thead .s{background:#d2d2d2;color:${G};line-height:9px;border-bottom:2px solid ${G}}
tbody th{line-height:9px;border-bottom:1px solid #d0d0d0;border-right-color:#a5a5a5}
tbody .s{background:#d2d2d2;color:${G};border-right:2px solid ${G}}
td{line-height:9px;padding:0 1px 0 2px;white-space:pre;border-right:1px solid #d9d9d9;border-bottom:1px solid #d9d9d9}
tr:nth-child(6n+4) td,tr:nth-child(6n+4) th{line-height:8px}
.n{text-align:right;padding:0 1px 0 0}
.k{border-color:#222}.kr{border-right-color:#222}
.h{background:#92d050;font-size:9px;font-weight:bold;text-align:left;overflow:hidden;padding:0 0 0 1px}
.o{overflow:visible}
.sel{position:relative;outline:1px solid ${G}}
.sel::after{content:"";position:absolute;right:-2px;bottom:-2px;width:3px;height:3px;background:${G};outline:1px solid #fff}
i{display:block;margin-left:auto;margin-right:3px;width:0;border:3px solid transparent;border-right-color:#b0b0b0;border-bottom-color:#b0b0b0}`,
() => `<table><colgroup>${WIDTHS.map(w => `<col style="width:${w}px">`).join('')}<col></colgroup><thead><tr><th><i></i></th>${[...LETTERS].map(l => `<th${l === 'H' ? ' class="s"' : ''}>${l}</th>`).join('')}</tr></thead><tbody>${Array.from({length: 33}, (_, r) => `<tr><th${r === 24 ? ' class="s"' : ''}>${r + 1}</th>${[...LETTERS].map((_, c) => cell(r, c)).join('')}</tr>`).join('')}</tbody></table>`);

const BARS = [[282,'0,50 - 2,10'],[343,'2,10 - 3,60'],[284,'3,60 - 5,70'],[287,'5,70 - 8,80'],[365,'8,80 - 11,10'],[396,'>= 11,10']];
define('xl-chart', `:host{position:absolute;left:401px;top:90px;width:275px;height:192px;background:#fff;border:1px solid #d9d9d9}
svg{display:block}text{font-family:"Liberation Serif",serif;font-size:7px;fill:#333}`,
() => `<svg width="273" height="190" viewBox="402 245 273 190" role="img" aria-label="Frequency Count"><text x="538" y="258" text-anchor="middle" style="font-size:10px">Frequency Count</text>
${[0,1,2,3,4,5,6,7].map(i => { const y = 405 - i * 18; return `<path d="M437 ${y}l12-9h214" fill="none" stroke="#d9d9d9"/><text x="432" y="${y + 2}" text-anchor="end">${i * 50}</text>`; }).join('')}
${BARS.map(([y, t], i) => { const x = 451 + i * 36; return `<path d="M${x} ${y}l5-4h15l-5 4z" fill="#2f5597"/><path d="M${x + 15} ${y}l5-4V399l-5 4z" fill="#264478"/><path d="M${x} ${y}h15V403h-15z" fill="#4472c4"/><text x="${x + 4}" y="414" text-anchor="middle">${esc(t)}</text>`; }).join('')}
<text x="544" y="424" text-anchor="middle">Rentang Kecepatan</text><text transform="translate(419 341) rotate(-90)" text-anchor="middle">Jumlah</text></svg>`);

define('xl-vscroll', `:host{display:flex;flex-direction:column;width:13px;background:#e6e6e6;padding:3px 1px 0}
button,div{border:1px solid #ababab;background:#fff;width:11px}
button{height:11px}div{flex:1;margin-bottom:4px;margin-top:-1px}
i{border:3px solid transparent}.u{border-bottom:4px solid #222;border-top:0}.d{border-top:4px solid #222;border-bottom:0}`,
`<button type="button" aria-label="Scroll up"><i class="u"></i></button><div></div><button type="button" aria-label="Scroll down"><i class="d"></i></button>`);

define('xl-sheettabs', `:host{display:flex;flex:none;height:20px;background:#e6e6e6;border-top:1px solid #ababab;border-bottom:1px solid #c6c6c6;font-family:"Open Sans",sans-serif;color:#555;align-items:stretch}
.nav{display:flex;width:72px;padding-left:10px;border-right:1px solid #ababab;margin:2px 0}
.nav button{width:20px}
.l,.r{border:3px solid transparent}.l{border-right:4px solid #bbb;border-left:0}.r{border-left:4px solid ${G};border-right:0}
.t{padding:0 9px;border-right:1px solid #ababab;margin:2px 0}
.on{margin:-1px 0 1px;padding:0 8px;background:#fff;border:0;border-bottom:2px solid ${G};color:${G};font-weight:bold}
.z{border:0;padding:0 2px 0 11px}
.m{color:${G};font-weight:bold;width:12px}
.p{width:26px}.dots{align-self:center;margin:0 10px 0 6px}
.sb{flex:1;display:flex;align-self:center;height:11px;margin-right:15px;background:#f0f0f0}
.sb button{width:11px;border:1px solid #ababab;background:#fff}
.th{flex:1;margin-left:14px;border:1px solid #ababab;background:#fff;border-right:0}
.sl,.sr{border:3px solid transparent}.sl{border-right:3px solid #111;border-left:0}.sr{border-left:3px solid #111;border-right:0}`,
`<div class="nav"><button type="button" aria-label="Previous sheet"><i class="l"></i></button><button type="button" aria-label="Next sheet"><i class="r"></i></button></div><button class="t" type="button">Data Angin Samson</button><button class="on" type="button">Frequency Count</button><button class="t" type="button">Frequency Distribution</button><button class="t" type="button">Wind Rose</button><button class="t z" type="button">Potensi Energi An</button><button class="m" type="button">...</button><button class="p" type="button" aria-label="New sheet"><x-icon name="plus"></x-icon></button><x-icon class="dots" name="dots"></x-icon><div class="sb"><button type="button" aria-label="Scroll left"><i class="sl"></i></button><div class="th"></div><button type="button" aria-label="Scroll right"><i class="sr"></i></button></div>`);

define('xl-status', `:host{display:flex;flex:none;height:15px;background:#f3f3f3;align-items:center;padding:0 5px 0 8px;color:#333;font-size:8px}
.a{margin:0 11px 0 14px}
b{margin-left:2px}
.v{width:28px;height:15px}.v.on{background:#c9c9c9}
.v1{margin-left:auto}
.z{width:13px;font-size:11px;height:15px}
input{appearance:none;width:70px;height:9px;margin:0;background:linear-gradient(#555,#555) 0 50%/100% 1px no-repeat,linear-gradient(#555,#555) 50% 50%/1px 3px no-repeat}
input::-webkit-slider-thumb{appearance:none;width:4px;height:8px;background:#444}
.pc{width:21px;text-align:right}`,
`<span>Ready</span><x-icon class="a" name="macro"></x-icon><x-icon name="access"></x-icon><b>Accessibility: Investigate</b><button class="v v1 on" type="button" aria-label="Normal"><x-icon name="viewN"></x-icon></button><button class="v" type="button" aria-label="Page Layout"><x-icon name="viewL"></x-icon></button><button class="v" type="button" aria-label="Page Break"><x-icon name="viewP"></x-icon></button><button class="z" type="button">−</button><input type="range" aria-label="Zoom" min="0" max="100" value="35"><button class="z" type="button">+</button><span class="pc">72%</span>`);

define('win-taskbar', `:host{display:flex;flex:none;height:21px;background:#1c1c1c;color:#fff;align-items:stretch;font-family:"Open Sans",sans-serif}
.a{width:26px}.a.r{border-bottom:2px solid #76b9ed}.a.y{border-bottom-color:#ffee00;background:linear-gradient(90deg,#7a6c14 50%,#3d3a20 50%)}.a.x{background:#444}
.w{margin-left:auto;gap:5px;margin-right:5px}
.i{width:16px}.up{width:24px}.c{width:30px;font-family:Lato,sans-serif}.n{width:32px;margin-right:3px;border-right:1px solid #555}`,
`<button class="a" type="button" aria-label="Start"><x-icon name="win"></x-icon></button><button class="a" type="button" aria-label="Search"><x-icon name="search"></x-icon></button>${[['explorer','r'],['fox','r y'],['spotify','r'],['chrome2','r'],['chrome','r'],['excel','r x']].map(([n, c]) => `<button class="a ${c}" type="button" aria-label="${n}"><x-icon name="${n}"></x-icon></button>`).join('')}<button class="w" type="button"><x-icon name="weather"></x-icon><span>27°C</span><span>Cerah</span></button><button class="up" type="button" aria-label="Hidden icons"><x-icon name="caret"></x-icon></button><button class="i" type="button" aria-label="Network"><x-icon name="wifi"></x-icon></button><button class="i" type="button" aria-label="Battery"><x-icon name="battery"></x-icon></button><button class="i" type="button" aria-label="Volume"><x-icon name="sound"></x-icon></button><button class="c" type="button">10:33</button><button class="n" type="button" aria-label="Notifications"><x-icon name="note"></x-icon></button>`);

define('xl-app', `:host{display:flex;flex-direction:column;height:100vh}
main{position:relative;flex:1;min-height:0;display:grid;grid-template-columns:1fr auto;overflow:hidden}`,
`<xl-header></xl-header><xl-ribbon></xl-ribbon><xl-formula></xl-formula><main><xl-grid></xl-grid><xl-vscroll></xl-vscroll><xl-chart></xl-chart></main><xl-sheettabs></xl-sheettabs><xl-status></xl-status><win-taskbar></win-taskbar>`);
</script>
</body>
</html>
